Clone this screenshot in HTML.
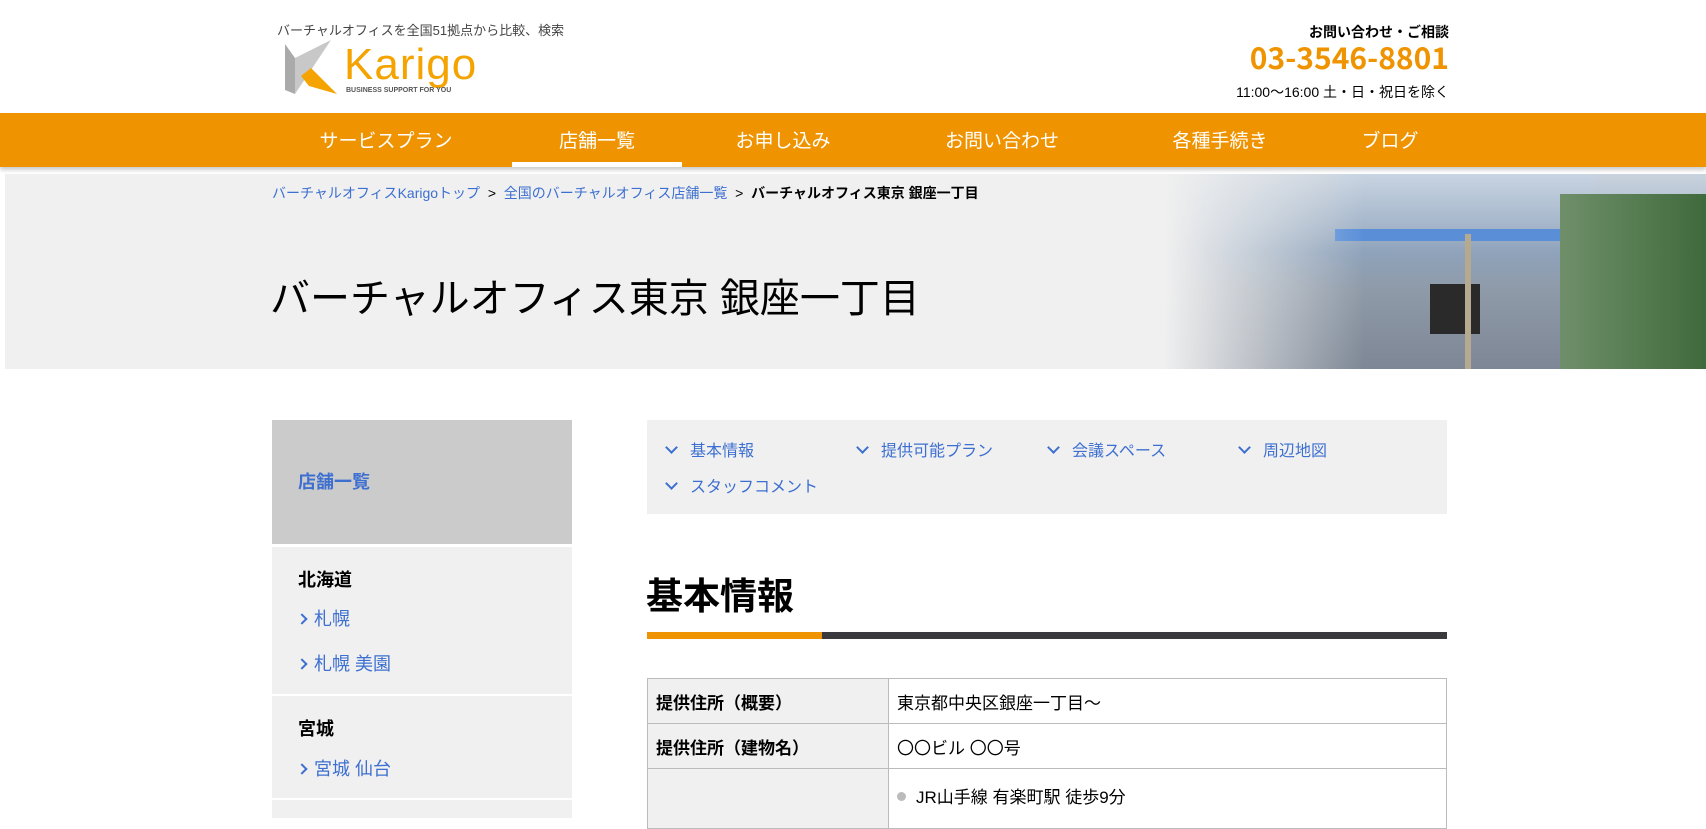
<!DOCTYPE html>
<html><head><meta charset="utf-8"><style>
*{margin:0;padding:0;box-sizing:border-box}
body{width:1706px;height:818px;overflow:hidden;background:#fff;font-family:"Liberation Sans","Noto Sans CJK JP",sans-serif;color:#000;position:relative}
.a{position:absolute;white-space:nowrap}
.nav{position:absolute;left:0;top:113px;width:1706px;height:54px;background:#ef9400;box-shadow:0 3px 4px rgba(0,0,0,.2);z-index:2}
.nav span{position:absolute;top:13px;font-size:19px;color:#fff;transform:translateX(-50%)}
.hero{position:absolute;left:5px;top:174px;width:1701px;height:195px;background:#f0f0f0;overflow:hidden}
.blue{color:#3d6fd1}
.side{position:absolute;left:272px;top:420px;width:300px;height:398px;background:#f0f0f0}
.tabs{position:absolute;left:647px;top:420px;width:800px;height:94px;background:#f0f0f0}
.tabs span{position:absolute;font-size:16px;color:#3d6fd1}
.tabs span:before{content:"";display:inline-block;width:7px;height:7px;border-right:2px solid #3d6fd1;border-bottom:2px solid #3d6fd1;transform:rotate(45deg);margin:0 14px 4px 4px}
.chev{display:inline-block;width:8px;height:8px;border-right:2.5px solid #3d6fd1;border-top:2.5px solid #3d6fd1;transform:rotate(45deg);margin:0 8px 2px 0}
table{position:absolute;left:647px;top:678px;width:800px;border-collapse:collapse;font-size:17px}
td{border:1px solid #bbb;height:45px;padding:0 8px}
td.h{background:#f0f0f0;font-weight:bold;width:241px}
</style></head><body>
<div class="a" style="left:277px;top:20px;font-size:13px;color:#444">バーチャルオフィスを全国51拠点から比較、検索</div>
<svg class="a" style="left:285px;top:40px" width="60" height="56" viewBox="0 0 60 56">
<polygon points="0,4 10,18 10,54 0,50" fill="#aaa"/>
<polygon points="10,18 46,0 22,36 10,54" fill="#c8c8c8"/>
<polygon points="16,36 26,28 52,54 24,46" fill="#f5a300"/>
</svg>
<div class="a" style="left:344px;top:40px;font-size:44px;color:#f5a300;letter-spacing:1px;font-family:'Liberation Sans',sans-serif">Karigo</div>
<div class="a" style="left:346px;top:87px;font-size:7px;color:#555;font-weight:bold">BUSINESS SUPPORT FOR YOU</div>
<div class="a" style="right:257px;top:22px;font-size:14px;font-weight:bold;font-family:'Noto Sans CJK JP',sans-serif">お問い合わせ・ご相談</div>
<div class="a" style="right:257px;top:37px;font-size:30px;font-weight:bold;color:#ef9400;font-family:'Noto Sans CJK JP',sans-serif;line-height:1.3">03-3546-8801</div>
<div class="a" style="right:257px;top:82px;font-size:14px">11:00〜16:00 土・日・祝日を除く</div>
<div class="nav">
<span style="left:386px">サービスプラン</span>
<span style="left:597px">店舗一覧</span>
<span style="left:783px">お申し込み</span>
<span style="left:1002px">お問い合わせ</span>
<span style="left:1220px">各種手続き</span>
<span style="left:1390px">ブログ</span>
<div style="position:absolute;left:512px;top:49px;width:170px;height:5px;background:#fff"></div>
</div>
<div class="hero">
<div style="position:absolute;left:1159px;top:0;width:542px;height:195px;background:linear-gradient(180deg,#c9d3de 0%,#a8b8cb 25%,#8fa3bb 40%,#8f9aa8 60%,#7d8795 100%)"></div>
<div style="position:absolute;left:1330px;top:0;width:260px;height:60px;background:linear-gradient(180deg,#c8d4e2,#9fb1c6)"></div>
<div style="position:absolute;left:1330px;top:55px;width:230px;height:12px;background:#5a8fd8"></div>
<div style="position:absolute;left:1555px;top:20px;width:146px;height:175px;background:linear-gradient(90deg,#6f8f6a,#3f6a3c)"></div>
<div style="position:absolute;left:1425px;top:110px;width:50px;height:50px;background:#2a2a2a"></div>
<div style="position:absolute;left:1460px;top:60px;width:6px;height:135px;background:#b5aa90"></div>
<div style="position:absolute;left:1159px;top:0;width:200px;height:195px;background:linear-gradient(90deg,#f0f0f0,rgba(240,240,240,0))"></div>
</div>
<div class="a" style="left:272px;top:183px;font-size:14px"><span class="blue">バーチャルオフィスKarigoトップ</span>&nbsp;&nbsp;&gt;&nbsp;&nbsp;<span class="blue">全国のバーチャルオフィス店舗一覧</span>&nbsp;&nbsp;&gt;&nbsp;&nbsp;<b>バーチャルオフィス東京 銀座一丁目</b></div>
<div class="a" style="left:270px;top:266px;font-size:40px">バーチャルオフィス東京 銀座一丁目</div>
<div class="side">
<div style="height:124px;background:#cbcbcb"></div>
<div style="height:3px;background:#fff"></div>
<div class="a blue" style="left:26px;top:48px;font-size:18px;font-weight:bold">店舗一覧</div>
<div class="a" style="left:26px;top:146px;font-size:18px;font-weight:bold">北海道</div>
<div class="a blue" style="left:26px;top:185px;font-size:18px"><span class="chev"></span>札幌</div>
<div class="a blue" style="left:26px;top:230px;font-size:18px"><span class="chev"></span>札幌 美園</div>
<div style="position:absolute;left:0;top:274px;width:300px;height:2px;background:#fff"></div>
<div class="a" style="left:26px;top:295px;font-size:18px;font-weight:bold">宮城</div>
<div class="a blue" style="left:26px;top:335px;font-size:18px"><span class="chev"></span>宮城 仙台</div>
<div style="position:absolute;left:0;top:378px;width:300px;height:2px;background:#fff"></div>
</div>
<div class="tabs">
<span style="left:16px;top:17px">基本情報</span>
<span style="left:207px;top:17px">提供可能プラン</span>
<span style="left:398px;top:17px">会議スペース</span>
<span style="left:589px;top:17px">周辺地図</span>
<span style="left:16px;top:53px">スタッフコメント</span>
</div>
<div class="a" style="left:646px;top:566px;font-size:37px;font-weight:bold">基本情報</div>
<div class="a" style="left:647px;top:632px;width:800px;height:7px;background:#3a3a3e"></div>
<div class="a" style="left:647px;top:632px;width:175px;height:7px;background:#ef9400"></div>
<table>
<tr><td class="h">提供住所（概要）</td><td>東京都中央区銀座一丁目〜</td></tr>
<tr><td class="h">提供住所（建物名）</td><td>〇〇ビル 〇〇号</td></tr>
<tr><td class="h" style="height:60px"></td><td style="vertical-align:top;padding-top:14px"><span style="display:inline-block;width:9px;height:9px;border-radius:50%;background:#bbb;margin:0 10px 2px 0"></span>JR山手線 有楽町駅 徒歩9分</td></tr>
</table>
</body></html>
